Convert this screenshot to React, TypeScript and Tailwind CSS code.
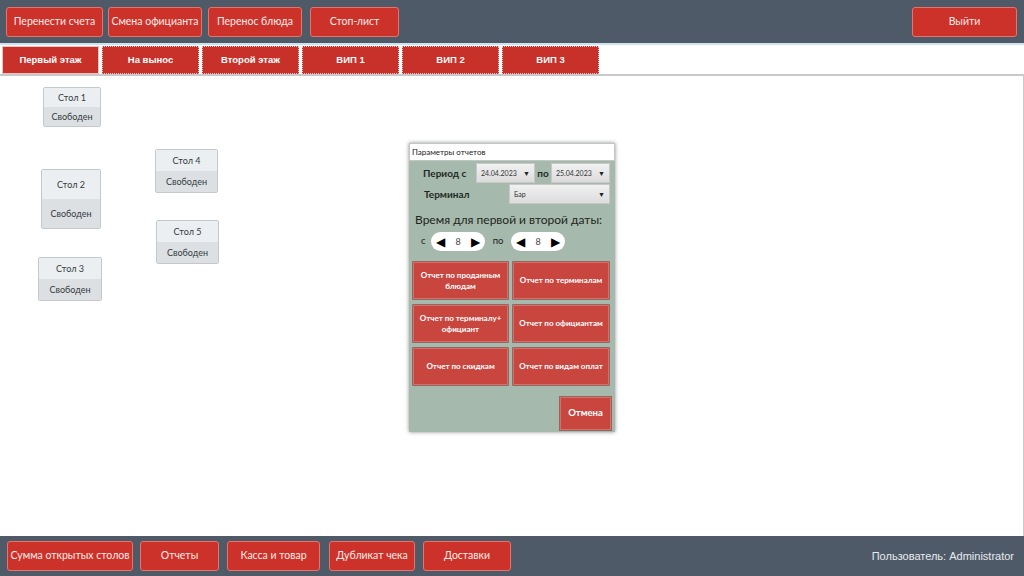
const topBtn =
  'h-[30px] rounded-[3px] border border-[#e8736b] bg-[#cc3229] text-[10.5px] text-[#fbecea] flex items-center justify-center whitespace-nowrap';

const tabBtn =
  'h-[28px] w-[97px] bg-[#c8302a] border border-dotted border-[#eac2be] text-[9.5px] font-bold text-white flex items-center justify-center whitespace-nowrap';

const reportBtn =
  'h-[39px] rounded-[1px] border border-[#8f6763] bg-[#c9463f] shadow-[inset_0_0_0_1px_#d96d67] text-[8px] leading-[11px] font-bold text-white flex items-center justify-center text-center px-[2px]';

const labelFont = { fontFamily: 'Lato, "Liberation Sans", sans-serif' };
const boldFont = { fontFamily: '"Liberation Sans", Arial, sans-serif' };

function Table({ name, top, left, w, h }: { name: string; top: number; left: number; w: number; h: number }) {
  return (
    <div
      className="absolute flex flex-col rounded-[2px] border border-[#c3c8cc] overflow-hidden text-[9px] text-[#333a40]"
      style={{ top, left, width: w, height: h }}
    >
      <div className="flex-1 bg-[#eceff1] flex items-center justify-center">{name}</div>
      <div className="flex-1 bg-[#dce0e3] flex items-center justify-center">Свободен</div>
    </div>
  );
}

function Select({ value, w }: { value: string; w: number }) {
  return (
    <div
      className="h-[20px] bg-gradient-to-b from-[#f1f1f1] to-[#dcdcdc] border border-[#c8c8c8] flex items-center justify-between px-[4px] text-[7px] text-[#333]"
      style={{ width: w }}
    >
      <span>{value}</span>
      <span className="text-[7px] text-[#222]">▼</span>
    </div>
  );
}

function Spinner() {
  return (
    <div className="w-[54px] h-[19px] rounded-full bg-white flex items-center justify-between px-[5px] text-[9px] text-[#444]">
      <span className="text-[12px] text-black leading-none">◀</span>
      <span>8</span>
      <span className="text-[12px] text-black leading-none">▶</span>
    </div>
  );
}

export default function App() {
  return (
    <div className="w-[1024px] h-[576px] flex flex-col bg-white overflow-hidden" style={labelFont}>
      {/* top bar */}
      <div className="h-[43px] bg-[#4e5a68] flex items-center pl-[6px] pr-[7px]">
        <div className={`${topBtn} w-[97px]`}>Перенести счета</div>
        <div className={`${topBtn} w-[94px] ml-[5px]`}>Смена официанта</div>
        <div className={`${topBtn} w-[94px] ml-[6px]`}>Перенос блюда</div>
        <div className={`${topBtn} w-[89px] ml-[8px]`}>Стоп-лист</div>
        <div className={`${topBtn} w-[105px] ml-auto`}>Выйти</div>
      </div>

      {/* tabs */}
      <div className="h-[33px] border-t-2 border-[#cfe3ee] border-b-2 border-b-[#c9c9c9] flex items-start pl-[2px] pt-[1px] gap-[3px]" style={boldFont}>
        <div className={`${tabBtn} border-solid border-[#a9cde0]`}>Первый этаж</div>
        <div className={tabBtn}>На вынос</div>
        <div className={tabBtn}>Второй этаж</div>
        <div className={tabBtn}>ВИП 1</div>
        <div className={tabBtn}>ВИП 2</div>
        <div className={tabBtn}>ВИП 3</div>
      </div>

      {/* floor */}
      <div className="relative flex-1 border-r border-[#c9c9c9]">
        <Table name="Стол 1" top={11} left={43} w={58} h={40} />
        <Table name="Стол 2" top={93} left={41} w={60} h={60} />
        <Table name="Стол 3" top={181} left={38} w={64} h={44} />
        <Table name="Стол 4" top={73} left={155} w={63} h={44} />
        <Table name="Стол 5" top={144} left={156} w={63} h={44} />

        {/* report dialog */}
        <div className="absolute top-[67px] left-[409px] w-[206px] h-[289px] bg-[#a5b9ac] shadow-[0_0_4px_rgba(0,0,0,0.45)] flex flex-col">
          <div className="h-[18px] bg-white border border-[#bfc8c2] flex items-center px-[2px] text-[8px] text-[#222]">
            Параметры отчетов
          </div>
          <div className="flex items-center mt-[2px] h-[20px]">
            <span className="w-[67px] pl-[14px] text-[10px] font-bold text-[#1f2a24]">Период с</span>
            <Select value="24.04.2023" w={59} />
            <span className="w-[16px] text-center text-[10px] font-bold text-[#1f2a24]">по</span>
            <Select value="25.04.2023" w={59} />
          </div>
          <div className="flex items-center mt-[1px] h-[20px]">
            <span className="w-[100px] pl-[15px] text-[10px] font-bold text-[#1f2a24]">Терминал</span>
            <Select value="Бар" w={101} />
          </div>
          <div className="mt-[7px] pl-[6px] text-[12px] text-[#1d2420]">Время для первой и второй даты:</div>
          <div className="mt-[3px] flex items-center h-[19px] pl-[12px] text-[9.5px] text-[#1d2420]">
            <span className="w-[10px]">с</span>
            <Spinner />
            <span className="w-[26px] text-center">по</span>
            <Spinner />
          </div>
          <div className="mt-[10px] grid grid-cols-[97px_98px] gap-x-[3px] gap-y-[4px] pl-[3px]">
            <div className={reportBtn}>Отчет по проданным блюдам</div>
            <div className={reportBtn}>Отчет по терминалам</div>
            <div className={reportBtn}>Отчет по терминалу+ официант</div>
            <div className={reportBtn}>Отчет по официантам</div>
            <div className={reportBtn}>Отчет по скидкам</div>
            <div className={reportBtn}>Отчет по видам оплат</div>
          </div>
          <div className="mt-[10px] flex justify-end pr-[3px]">
            <div className="w-[53px] h-[35px] border border-[#8f6763] bg-[#c9463f] shadow-[inset_0_0_0_1px_#d96d67] text-[9.5px] font-bold text-white flex items-center justify-center">
              Отмена
            </div>
          </div>
        </div>
      </div>

      {/* bottom bar */}
      <div className="h-[40px] bg-[#4e5a68] flex items-center pl-[7px] pr-[10px]">
        <div className={`${topBtn} h-[27px] w-[126px]`}>Сумма открытых столов</div>
        <div className={`${topBtn} h-[27px] w-[79px] ml-[7px]`}>Отчеты</div>
        <div className={`${topBtn} h-[27px] w-[93px] ml-[8px]`}>Касса и товар</div>
        <div className={`${topBtn} h-[27px] w-[86px] ml-[9px]`}>Дубликат чека</div>
        <div className={`${topBtn} h-[27px] w-[88px] ml-[8px]`}>Доставки</div>
        <div className="ml-auto text-[11px] text-[#e8ebee]" style={boldFont}>
          Пользователь: Administrator
        </div>
      </div>
    </div>
  );
}
